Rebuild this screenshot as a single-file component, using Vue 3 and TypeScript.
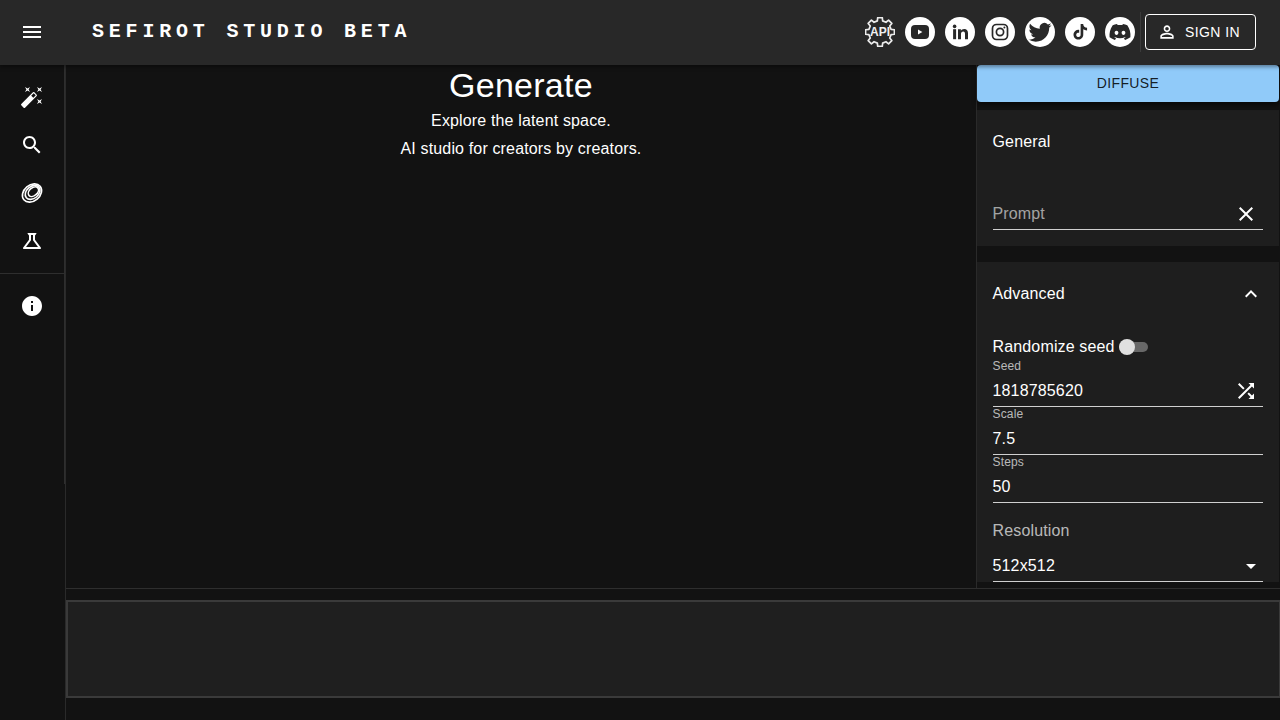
<script setup lang="ts">
interface NavItem {
  name: string
  path: string
}

const navTop: NavItem[] = [
  {
    name: 'generate',
    path: 'M7.5 5.6 10 7 8.6 4.5 10 2 7.5 3.4 5 2l1.4 2.5L5 7zm12 9.8L17 14l1.4 2.5L17 19l2.5-1.4L22 19l-1.4-2.5L22 14zM22 2l-2.5 1.4L17 2l1.4 2.5L17 7l2.5-1.4L22 7l-1.4-2.5zm-7.63 5.29a.9959.9959 0 0 0-1.41 0L1.29 18.96c-.39.39-.39 1.02 0 1.41l2.34 2.34c.39.39 1.02.39 1.41 0L16.7 11.05c.39-.39.39-1.02 0-1.41l-2.33-2.35zm-1.03 5.49-2.12-2.12 2.44-2.44 2.12 2.12-2.44 2.44z',
  },
  {
    name: 'search',
    path: 'M15.5 14h-.79l-.28-.27C15.41 12.59 16 11.11 16 9.5 16 5.91 13.09 3 9.5 3S3 5.91 3 9.5 5.91 16 9.5 16c1.61 0 3.09-.59 4.23-1.57l.27.28v.79l5 4.99L20.49 19l-4.99-5zm-6 0C7.01 14 5 11.99 5 9.5S7.01 5 9.5 5 14 7.01 14 9.5 11.99 14 9.5 14z',
  },
]

const science =
  'M13 11.33 18 18H6l5-6.67V6h2m2.96-2H8.04c-.42 0-.65.48-.39.81L9 6.5v4.17L3.2 18.4c-.49.66-.02 1.6.8 1.6h16c.82 0 1.29-.94.8-1.6L15 10.67V6.5l1.35-1.69c.26-.33.03-.81-.39-.81z'
const info =
  'M12 2C6.48 2 2 6.48 2 12s4.48 10 10 10 10-4.48 10-10S17.52 2 12 2zm1 15h-2v-6h2v6zm0-8h-2V7h2v2z'
const twitter =
  'M23.953 4.57a10 10 0 01-2.825.775 4.958 4.958 0 002.163-2.723c-.951.555-2.005.959-3.127 1.184a4.92 4.92 0 00-8.384 4.482C7.69 8.095 4.067 6.13 1.64 3.162a4.822 4.822 0 00-.666 2.475c0 1.71.87 3.213 2.188 4.096a4.904 4.904 0 01-2.228-.616v.06a4.923 4.923 0 003.946 4.827 4.996 4.996 0 01-2.212.085 4.936 4.936 0 004.604 3.417 9.867 9.867 0 01-6.102 2.105c-.39 0-.779-.023-1.17-.067a13.995 13.995 0 007.557 2.209c9.053 0 13.998-7.496 13.998-13.985 0-.21 0-.42-.015-.63A9.935 9.935 0 0024 4.59z'
const tiktok =
  'M12.525.02c1.31-.02 2.61-.01 3.91-.02.08 1.53.63 3.09 1.75 4.17 1.12 1.11 2.7 1.62 4.24 1.79v4.03c-1.44-.05-2.89-.35-4.2-.97-.57-.26-1.1-.59-1.62-.93-.01 2.92.01 5.84-.02 8.75-.08 1.4-.54 2.79-1.35 3.94-1.31 1.92-3.58 3.17-5.91 3.21-1.43.08-2.86-.31-4.08-1.03-2.02-1.19-3.44-3.37-3.65-5.71-.02-.5-.03-1-.01-1.49.18-1.9 1.12-3.72 2.58-4.96 1.66-1.44 3.98-2.13 6.15-1.72.02 1.48-.04 2.96-.04 4.44-.99-.32-2.15-.23-3.02.37-.63.41-1.11 1.04-1.36 1.75-.21.51-.15 1.07-.14 1.61.24 1.64 1.82 3.02 3.5 2.87 1.12-.01 2.19-.66 2.77-1.61.19-.33.4-.67.41-1.06.1-1.79.06-3.57.07-5.36.01-4.03-.01-8.05.02-12.07z'
const discord =
  'M20.317 4.3698a19.7913 19.7913 0 00-4.8851-1.5152.0741.0741 0 00-.0785.0371c-.211.3753-.4447.8648-.6083 1.2495-1.8447-.2762-3.68-.2762-5.4868 0-.1636-.3933-.4058-.8742-.6177-1.2495a.077.077 0 00-.0785-.037 19.7363 19.7363 0 00-4.8852 1.515.0699.0699 0 00-.0321.0277C.5334 9.0458-.319 13.5799.0992 18.0578a.0824.0824 0 00.0312.0561c2.0528 1.5076 4.0413 2.4228 5.9929 3.0294a.0777.0777 0 00.0842-.0276c.4616-.6304.8731-1.2952 1.226-1.9942a.076.076 0 00-.0416-.1057c-.6528-.2476-1.2743-.5495-1.8722-.8923a.077.077 0 01-.0076-.1277c.1258-.0943.2517-.1923.3718-.2914a.0743.0743 0 01.0776-.0105c3.9278 1.7933 8.18 1.7933 12.0614 0a.0739.0739 0 01.0785.0095c.1202.099.246.1981.3728.2924a.077.077 0 01-.0066.1276 12.2986 12.2986 0 01-1.873.8914.0766.0766 0 00-.0407.1067c.3604.698.7719 1.3628 1.225 1.9932a.076.076 0 00.0842.0286c1.961-.6067 3.9495-1.5219 6.0023-3.0294a.077.077 0 00.0313-.0552c.5004-5.177-.8382-9.6739-3.5485-13.6604a.061.061 0 00-.0312-.0286zM8.02 15.3312c-1.1825 0-2.1569-1.0857-2.1569-2.419 0-1.3332.9555-2.4189 2.157-2.4189 1.2108 0 2.1757 1.0952 2.1568 2.419 0 1.3332-.9555 2.4189-2.1569 2.4189zm7.9748 0c-1.1825 0-2.1569-1.0857-2.1569-2.419 0-1.3332.9554-2.4189 2.1569-2.4189 1.2108 0 2.1757 1.0952 2.1568 2.419 0 1.3332-.946 2.4189-2.1568 2.4189Z'

// outline of the API badge, 8 teeth round the centre of a 30 box
const gearPath = (() => {
  const pts: string[] = []
  const teeth = 8
  const step = (Math.PI * 2) / teeth
  for (let i = 0; i < teeth; i++) {
    const a = i * step - Math.PI / 2
    const corners: [number, number][] = [
      [11.4, -0.3],
      [14.6, -0.2],
      [14.6, 0.2],
      [11.4, 0.3],
    ]
    for (const [r, off] of corners) {
      const t = a + off * step
      pts.push(`${(15 + r * Math.cos(t)).toFixed(2)} ${(15 + r * Math.sin(t)).toFixed(2)}`)
    }
  }
  return 'M' + pts.join('L') + 'Z'
})()

const fields = [
  { label: 'Scale', value: '7.5' },
  { label: 'Steps', value: '50' },
]
</script>

<template>
  <div class="app">
    <header class="topbar">
      <button class="menu-btn" aria-label="menu">
        <svg class="icon" viewBox="0 0 24 24"><path d="M3 18h18v-2H3v2zm0-5h18v-2H3v2zm0-7v2h18V6H3z" /></svg>
      </button>
      <div class="brand">SEFIROT STUDIO BETA</div>
      <div class="socials">
        <span class="social">
          <svg viewBox="0 0 30 30" class="social-svg">
            <path :d="gearPath" fill="none" stroke="#ececec" stroke-width="1.7" stroke-linejoin="round" />
            <text x="15" y="19.3" text-anchor="middle" class="api-text">API</text>
          </svg>
        </span>
        <span class="social">
          <svg viewBox="0 0 30 30" class="social-svg">
            <circle cx="15" cy="15" r="15" fill="#fff" />
            <rect x="6" y="8" width="18" height="14" rx="4" fill="#282828" />
            <path d="M13 12.4v5.2l4.4-2.6z" fill="#fff" />
          </svg>
        </span>
        <span class="social">
          <svg viewBox="0 0 30 30" class="social-svg">
            <circle cx="15" cy="15" r="15" fill="#fff" />
            <circle cx="9.6" cy="9.4" r="1.8" fill="#282828" />
            <rect x="8.1" y="12.2" width="3" height="10" fill="#282828" />
            <path d="M13 12.2h2.9v1.5c.6-1 1.8-1.8 3.3-1.8 2.7 0 3.8 1.7 3.8 4.4v5.9h-3v-5.3c0-1.4-.5-2.3-1.8-2.3-1.4 0-2.2 1-2.2 2.4v5.2h-3z" fill="#282828" />
          </svg>
        </span>
        <span class="social">
          <svg viewBox="0 0 30 30" class="social-svg">
            <circle cx="15" cy="15" r="15" fill="#fff" />
            <rect x="7.5" y="7.5" width="15" height="15" rx="4" fill="none" stroke="#282828" stroke-width="1.7" />
            <circle cx="15" cy="15" r="3.6" fill="none" stroke="#282828" stroke-width="1.7" />
            <circle cx="19.4" cy="10.6" r="1" fill="#282828" />
          </svg>
        </span>
        <span class="social">
          <svg viewBox="0 0 30 30" class="social-svg">
            <circle cx="15" cy="15" r="15" fill="#fff" />
            <g transform="translate(3.5 3.8) scale(0.96)"><path :d="twitter" fill="#282828" /></g>
          </svg>
        </span>
        <span class="social">
          <svg viewBox="0 0 30 30" class="social-svg">
            <circle cx="15" cy="15" r="15" fill="#fff" />
            <g transform="translate(7.5 7) scale(0.65)"><path :d="tiktok" fill="#282828" /></g>
          </svg>
        </span>
        <span class="social">
          <svg viewBox="0 0 30 30" class="social-svg">
            <circle cx="15" cy="15" r="15" fill="#fff" />
            <g transform="translate(4.5 4.5) scale(0.875)"><path :d="discord" fill="#282828" /></g>
          </svg>
        </span>
      </div>
      <span class="bar-divider"></span>
      <button class="signin">
        <svg class="icon small" viewBox="0 0 24 24">
          <path d="M12 5.9c1.16 0 2.1.94 2.1 2.1s-.94 2.1-2.1 2.1S9.9 9.16 9.9 8s.94-2.1 2.1-2.1m0 9c2.97 0 6.1 1.46 6.1 2.1v1.1H5.9V17c0-.64 3.13-2.1 6.1-2.1M12 4C9.79 4 8 5.79 8 8s1.79 4 4 4 4-1.79 4-4-1.79-4-4-4zm0 9c-2.67 0-8 1.34-8 4v3h16v-3c0-2.66-5.33-4-8-4z" />
        </svg>
        Sign in
      </button>
    </header>

    <div class="body">
      <nav class="drawer">
        <ul class="nav-list">
          <li v-for="item in navTop" :key="item.name" class="nav-row">
            <svg class="icon" viewBox="0 0 24 24"><path :d="item.path" /></svg>
          </li>
          <li class="nav-row">
            <svg class="icon" viewBox="0 0 24 24">
              <g stroke="#fff" stroke-width="1.6" fill="none">
                <ellipse cx="12" cy="12" rx="10.6" ry="8" transform="rotate(-40 12 12)" />
                <ellipse cx="12.6" cy="11.4" rx="8.2" ry="6" transform="rotate(-40 12.6 11.4)" />
                <ellipse cx="13.4" cy="10.7" rx="5.8" ry="3.9" transform="rotate(-40 13.4 10.7)" />
              </g>
            </svg>
          </li>
          <li class="nav-row">
            <svg class="icon" viewBox="0 0 24 24"><path :d="science" /></svg>
          </li>
        </ul>
        <div class="nav-divider"></div>
        <ul class="nav-list">
          <li class="nav-row">
            <svg class="icon" viewBox="0 0 24 24"><path :d="info" /></svg>
          </li>
        </ul>
      </nav>

      <main class="main">
        <div class="work">
          <section class="intro">
            <h1>Generate</h1>
            <p>Explore the latent space.</p>
            <p>AI studio for creators by creators.</p>
          </section>

          <aside class="side">
            <button class="diffuse">Diffuse</button>

            <div class="panel general">
              <div class="panel-title">General</div>
              <div class="input-row prompt">
                <span class="placeholder">Prompt</span>
                <svg class="icon" viewBox="0 0 24 24">
                  <path d="M19 6.41 17.59 5 12 10.59 6.41 5 5 6.41 10.59 12 5 17.59 6.41 19 12 13.41 17.59 19 19 17.59 13.41 12z" />
                </svg>
              </div>
            </div>

            <div class="panel advanced">
              <div class="panel-head">
                <span>Advanced</span>
                <svg class="icon" viewBox="0 0 24 24"><path d="m12 8-6 6 1.41 1.41L12 10.83l4.59 4.58L18 14z" /></svg>
              </div>
              <div class="random">
                <span>Randomize seed</span>
                <span class="switch"><span class="thumb"></span></span>
              </div>
              <div class="field">
                <label>Seed</label>
                <div class="input-row">
                  <span>1818785620</span>
                  <svg class="icon" viewBox="0 0 24 24">
                    <path d="M10.59 9.17 5.41 4 4 5.41l5.17 5.17 1.42-1.41zM14.5 4l2.04 2.04L4 18.59 5.41 20 17.96 7.46 20 9.5V4h-5.5zm.33 9.41-1.41 1.41 3.13 3.13L14.5 20H20v-5.5l-2.04 2.04-3.13-3.13z" />
                  </svg>
                </div>
              </div>
              <div v-for="f in fields" :key="f.label" class="field">
                <label>{{ f.label }}</label>
                <div class="input-row">
                  <span>{{ f.value }}</span>
                </div>
              </div>
              <div class="resolution">
                <div class="res-label">Resolution</div>
                <div class="input-row res-value">
                  <span>512x512</span>
                  <svg class="icon caret" viewBox="0 0 24 24"><path d="M7 10l5 5 5-5z" /></svg>
                </div>
              </div>
            </div>
          </aside>
        </div>

        <div class="strip"></div>
      </main>
    </div>
  </div>
</template>

<style scoped>
.app {
  width: 1280px;
  height: 720px;
  overflow: hidden;
  display: flex;
  flex-direction: column;
  background: #121212;
  color: #fff;
  font-family: 'Liberation Sans', Arial, sans-serif;
  font-size: 16px;
  letter-spacing: 0.15px;
}

.icon {
  width: 24px;
  height: 24px;
  fill: #fff;
  flex: none;
  display: block;
}

.icon.small {
  width: 20px;
  height: 20px;
}

button {
  font-family: inherit;
  color: inherit;
  background: none;
  border: 0;
  padding: 0;
}

/* верхняя панель */
.topbar {
  height: 65px;
  flex: none;
  display: flex;
  align-items: center;
  padding: 0 24px 1px 20px;
  box-sizing: border-box;
  background: #282828;
  position: relative;
  z-index: 2;
  box-shadow: 0 2px 4px rgba(0, 0, 0, 0.4);
}

.menu-btn {
  width: 24px;
  height: 24px;
}

.brand {
  margin-left: 48px;
  font-family: 'Liberation Mono', monospace;
  font-weight: 700;
  font-size: 20px;
  letter-spacing: 4.8px;
  color: #fff;
  white-space: nowrap;
  position: relative;
  top: -1px;
}

.socials {
  margin-left: auto;
  display: flex;
  align-items: center;
}

.social {
  width: 40px;
  height: 40px;
  display: flex;
  align-items: center;
  justify-content: center;
}

.social-svg {
  width: 30px;
  height: 30px;
  display: block;
}

.api-text {
  font-family: 'Liberation Sans', Arial, sans-serif;
  font-weight: 700;
  font-size: 12px;
  fill: #f0f0f0;
  letter-spacing: 0;
}

.bar-divider {
  width: 1px;
  height: 40px;
  background: #3b3b3b;
  margin-left: 0;
}

.signin {
  margin-left: 4px;
  width: 111px;
  height: 36px;
  box-sizing: border-box;
  border: 1px solid #fff;
  border-radius: 4px;
  display: flex;
  align-items: center;
  justify-content: center;
  gap: 8px;
  padding-right: 4px;
  font-size: 14px;
  letter-spacing: 0.4px;
  text-transform: uppercase;
}

/* тело страницы */
.body {
  flex: 1;
  min-height: 0;
  display: flex;
}

.drawer {
  width: 65px;
  flex: none;
  height: 419px;
  box-sizing: border-box;
  border-right: 1px solid #2e2e2e;
}

.nav-list {
  list-style: none;
  margin: 0;
  padding: 8px 0;
}

.nav-row {
  height: 48px;
  padding-left: 20px;
  display: flex;
  align-items: center;
}

.nav-divider {
  height: 1px;
  background: #2e2e2e;
}

.main {
  flex: 1;
  min-width: 0;
  display: flex;
  flex-direction: column;
  border-left: 1px solid #2a2a2a;
}

.work {
  height: 523px;
  flex: none;
  display: flex;
  border-bottom: 1px solid #2e2e2e;
  box-sizing: content-box;
  overflow: hidden;
}

.intro {
  flex: 1;
  min-width: 0;
  text-align: center;
}

.intro h1 {
  margin: 0 0 2px;
  font-size: 34px;
  font-weight: 400;
  line-height: 40px;
  letter-spacing: 0.25px;
}

.intro p {
  margin: 0;
  line-height: 28px;
}

.side {
  width: 304px;
  flex: none;
  box-sizing: border-box;
  border-left: 1px solid #2a2a2a;
  padding-right: 1px;
  display: flex;
  flex-direction: column;
}

.diffuse {
  height: 37px;
  flex: none;
  background: #90caf9;
  color: rgba(0, 0, 0, 0.87);
  border-radius: 4px;
  font-size: 14px;
  letter-spacing: 0.4px;
  text-transform: uppercase;
  padding-bottom: 1px;
  box-shadow: 0 3px 5px rgba(0, 0, 0, 0.5);
  position: relative;
}

.panel {
  background: #1e1e1e;
  padding: 0 16px 0 15.5px;
  flex: none;
}

.general {
  margin-top: 8px;
  height: 136px;
  box-sizing: border-box;
  padding-top: 21px;
}

.panel-title {
  line-height: 21px;
}

.input-row {
  height: 32px;
  box-sizing: border-box;
  border-bottom: 1px solid #d0d0d0;
  display: flex;
  align-items: center;
  justify-content: space-between;
  padding-right: 5px;
}

.prompt {
  margin-top: 46px;
}

.placeholder {
  color: rgba(255, 255, 255, 0.6);
}

.advanced {
  margin-top: 16px;
}

.panel-head {
  height: 62px;
  padding-top: 1px;
  display: flex;
  align-items: center;
  justify-content: space-between;
}

.random {
  height: 24px;
  display: flex;
  align-items: center;
  gap: 4px;
  margin-top: 10px;
}

.switch {
  width: 29px;
  height: 10px;
  border-radius: 5px;
  background: #686868;
  position: relative;
}

.thumb {
  position: absolute;
  left: 0;
  top: -3px;
  width: 16px;
  height: 16px;
  border-radius: 50%;
  background: #e0e0e0;
}

.field {
  height: 48px;
}

.field label {
  display: block;
  height: 16px;
  font-size: 12px;
  line-height: 14px;
  letter-spacing: 0.15px;
  color: rgba(255, 255, 255, 0.7);
}

.res-label {
  height: 24px;
  line-height: 24px;
  margin-top: 16px;
  color: rgba(255, 255, 255, 0.7);
}

.res-value {
  height: 34px;
  margin-top: 5px;
  padding: 2px 0 0;
}

.strip {
  margin-top: 11px;
  height: 98px;
  flex: none;
  box-sizing: border-box;
  background: #1f1f1f;
  border: 2px solid #3a3a3a;
  border-right-width: 1px;
}
</style>

<style>
html,
body {
  margin: 0;
  background: #121212;
}
</style>
